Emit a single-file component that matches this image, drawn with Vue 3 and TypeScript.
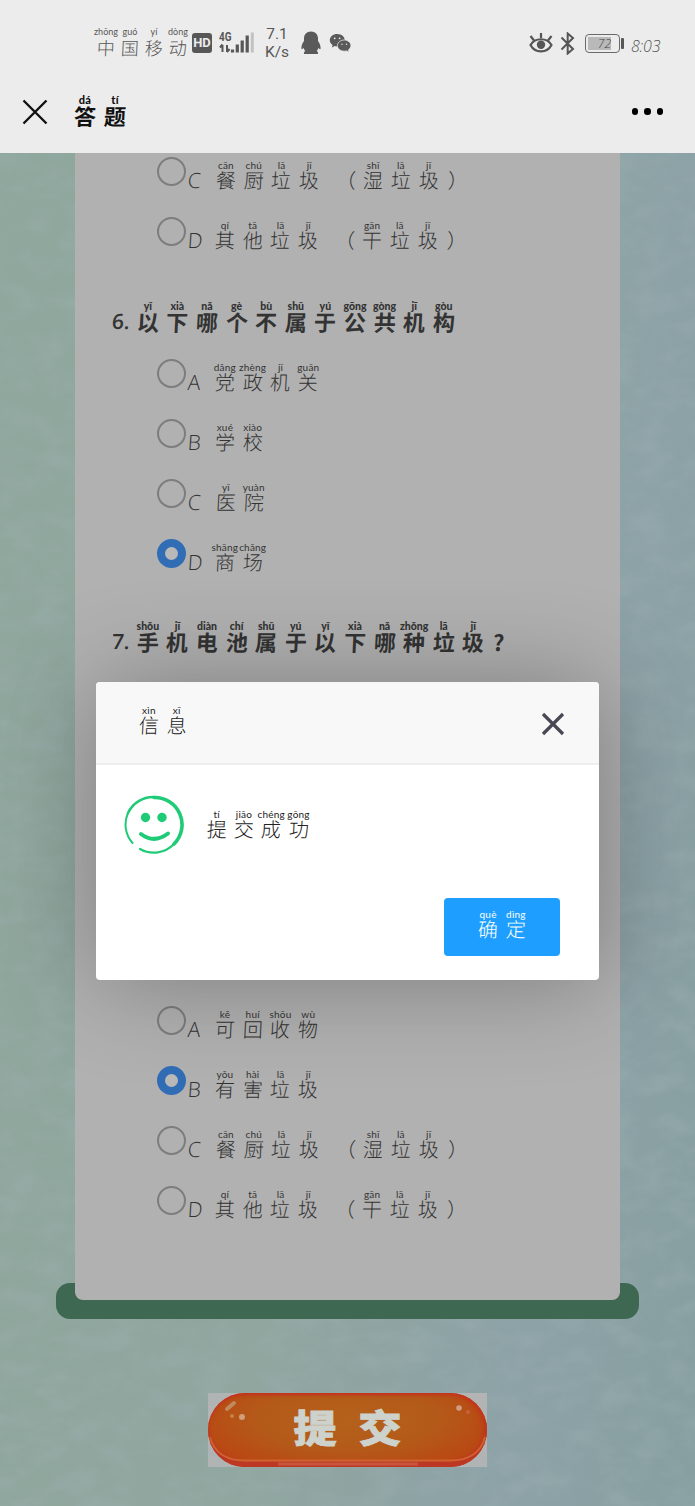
<script setup lang="ts">
interface Glyph { han: string; py: string; kind: string }
interface Option { letter: string; text: Glyph[]; checked?: boolean }
interface Question { id: string; no?: string; title: Glyph[]; options: Option[] }

const parse = (source: string): Glyph[] =>
  source.split(' ').map((part) => {
    const [han, py = ''] = part.split(':')
    const kind = han === '（' ? 'open' : han === '）' ? 'close' : han === '？' ? 'mark' : ''
    return { han: han === '？' ? '?' : han, py, kind }
  })

const opt = (letter: string, source: string, checked = false): Option => ({ letter, text: parse(source), checked })

const wet = '餐:cān 厨:chú 垃:lā 圾:jī （ 湿:shī 垃:lā 圾:jī ）'
const dry = '其:qí 他:tā 垃:lā 圾:jī （ 干:gān 垃:lā 圾:jī ）'

const questions: Question[] = [
  { id: 'q5', title: [], options: [opt('C', wet), opt('D', dry)] },
  {
    id: 'q6',
    no: '6.',
    title: parse('以:yǐ 下:xià 哪:nǎ 个:gè 不:bù 属:shǔ 于:yú 公:gōng 共:gòng 机:jī 构:gòu'),
    options: [
      opt('A', '党:dǎng 政:zhèng 机:jī 关:guān'),
      opt('B', '学:xué 校:xiào'),
      opt('C', '医:yī 院:yuàn'),
      opt('D', '商:shāng 场:chǎng', true),
    ],
  },
  {
    id: 'q7',
    no: '7.',
    title: parse('手:shǒu 机:jī 电:diàn 池:chí 属:shǔ 于:yú 以:yǐ 下:xià 哪:nǎ 种:zhǒng 垃:lā 圾:jī ？'),
    options: [],
  },
  {
    id: 'q8',
    title: [],
    options: [
      opt('A', '可:kě 回:huí 收:shōu 物:wù'),
      opt('B', '有:yǒu 害:hài 垃:lā 圾:jī', true),
      opt('C', wet),
      opt('D', dry),
    ],
  },
]

const carrier = parse('中:zhōng 国:guó 移:yí 动:dòng')
const pageTitle = parse('答:dá 题:tí')
const dialogTitle = parse('信:xìn 息:xī')
const message = parse('提:tí 交:jiāo 成:chéng 功:gōng')
const confirm = parse('确:què 定:dìng')
</script>

<template>
  <div class="page">
    <header class="top">
      <div class="status">
        <span class="glyphs carrier">
          <span v-for="(g, i) in carrier" :key="i" class="cell"><small>{{ g.py }}</small><b>{{ g.han }}</b></span>
        </span>
        <span class="hd">HD</span>
        <svg class="signal" width="36" height="24" viewBox="0 0 36 24">
          <text x="0" y="9.5" font-size="12" font-weight="700" textLength="12.500" lengthAdjust="spacingAndGlyphs" fill="#575757">4G</text>
          <path d="M3.500 21v-7M3.500 13.500L1 16.500M8 14v7M8 21l2.500-3" stroke="#575757" stroke-width="2" fill="none" />
          <path d="M13.500 21.500v-3M18.300 21.500v-8M23.200 21.500v-12M28.200 21.500v-17" stroke="#575757" stroke-width="3.200" />
          <path d="M33.300 21.500v-20" stroke="#c2c2c2" stroke-width="3" />
        </svg>
        <span class="speed">7.1<br />K/s</span>
        <svg class="qq" width="20" height="24" viewBox="0 0 20 24" fill="#5a5a5a">
          <path d="M10 .5C5.600.5 3 3.500 3 7.500v2.500C1.600 12 .3 14.500.4 17.200c.1 1.500 1 1.400 2.200-.4.400 1.500 1 2.500 1.800 3.300-1.400.6-1.600 1.400-1.300 3h13.800c.3-1.600.1-2.400-1.300-3 .8-.8 1.400-1.800 1.800-3.300 1.200 1.800 2.100 1.900 2.200.4.100-2.700-1.200-5.200-2.600-7.200V7.500c0-4-2.600-7-7-7z" />
        </svg>
        <svg class="wechat" width="23" height="20" viewBox="0 0 23 20">
          <path d="M8.300 1C4 1 .8 3.700.8 7.200c0 2 1.100 3.700 2.800 4.800l-.8 2.600 3-1.500c.8.200 1.600.3 2.500.3 4.200 0 7.500-2.800 7.500-6.200S12.500 1 8.300 1z" fill="#5a5a5a" />
          <path d="M15.300 7c-3.900 0-6.900 2.500-6.900 5.600s3 5.600 6.900 5.600c.8 0 1.500-.1 2.200-.3l2.600 1.400-.7-2.400c1.500-1 2.500-2.500 2.500-4.300 0-3.100-2.900-5.600-6.600-5.600z" fill="#5a5a5a" stroke="#ececec" stroke-width=".8" />
          <g fill="#ececec"><circle cx="5.700" cy="5.300" r=".9" /><circle cx="10.600" cy="5.300" r=".9" /><circle cx="13" cy="11.300" r=".7" /><circle cx="17.500" cy="11.300" r=".7" /></g>
        </svg>
        <svg class="eye" width="24" height="22" viewBox="0 0 24 22" fill="none" stroke="#555" stroke-width="2.200">
          <path d="M1.500 13C6 5.300 18 5.300 22.500 13 18 21.500 6 21.500 1.500 13z" />
          <circle cx="12" cy="12.800" r="4.200" fill="#555" stroke="none" />
          <path d="M12 6V1M5 8.500L1.500 4M19 8.500L22.500 4" />
        </svg>
        <svg class="bt" width="15" height="23" viewBox="0 0 15 23" fill="none" stroke="#555" stroke-width="2">
          <path d="M1.500 5.500L13 17l-5.300 4.500v-20L13 6 1.500 17.500" />
        </svg>
        <span class="battery"><i>72</i></span>
        <span class="clock">8:03</span>
      </div>
      <div class="nav">
        <svg width="26" height="26" viewBox="0 0 26 26"><path d="M1.500 1.500l23 23M24.500 1.500l-23 23" stroke="#111" stroke-width="2.400" /></svg>
        <span class="glyphs title">
          <span v-for="(g, i) in pageTitle" :key="i" class="cell"><small>{{ g.py }}</small><b>{{ g.han }}</b></span>
        </span>
        <span class="dots"><i /><i /><i /></span>
      </div>
    </header>

    <main class="content">
      <svg class="texture" width="695" height="1353" aria-hidden="true">
        <filter id="paper" x="0" y="0" width="100%" height="100%">
          <feTurbulence type="fractalNoise" baseFrequency="0.03 0.05" numOctaves="4" seed="4" />
          <feColorMatrix values="0 0 0 0 .35  0 0 0 0 .45  0 0 0 0 .46  2.4 0 0 0 -.95" />
        </filter>
        <rect width="695" height="1353" filter="url(#paper)" />
      </svg>
      <div class="base" />
      <div class="panel">
        <section v-for="q in questions" :key="q.id" :class="['question', q.id]">
          <h2 v-if="q.no">
            <span class="num">{{ q.no }}</span>
            <span class="glyphs heading">
              <span v-for="(g, i) in q.title" :key="i" :class="['cell', g.kind]"><small>{{ g.py }}</small><b>{{ g.han }}</b></span>
            </span>
          </h2>
          <div v-for="o in q.options" :key="o.letter" class="option">
            <span :class="['radio', { checked: o.checked }]" />
            <span :class="['letter', { wide: o.letter === 'C' }]">{{ o.letter }}</span>
            <span class="glyphs">
              <span v-for="(g, i) in o.text" :key="i" :class="['cell', g.kind]"><small>{{ g.py }}</small><b>{{ g.han }}</b></span>
            </span>
          </div>
        </section>
      </div>
      <div class="submit"><button><span>提</span><span>交</span>
        <svg width="279" height="74" viewBox="0 0 279 74" fill="none">
          <path d="M2 44C6 60 19 67.500 36 67.500h207c17 0 30-7.500 34-23.500" stroke="#cf6233" stroke-width="1.800" />
          <path d="M70 71h140" stroke="#cf6a4c" stroke-width="3" opacity=".6" />
          <path d="M19 16l7-6" stroke="#c08a5c" stroke-width="4" stroke-linecap="round" />
          <circle cx="34" cy="24" r="3" fill="#cfa079" /><circle cx="24" cy="23" r="2" fill="#c48447" />
          <circle cx="251" cy="15" r="2.800" fill="#d29c83" /><circle cx="260" cy="19" r="2" fill="#c9613c" />
        </svg>
      </button></div>
    </main>

    <div class="dialog">
      <div class="dialog-head">
        <span class="glyphs">
          <span v-for="(g, i) in dialogTitle" :key="i" class="cell"><small>{{ g.py }}</small><b>{{ g.han }}</b></span>
        </span>
        <svg width="24" height="24" viewBox="0 0 24 24"><path d="M2 2l20 20M22 2L2 22" stroke="#4a4754" stroke-width="3.200" /></svg>
      </div>
      <div class="dialog-body">
        <svg width="60" height="60" viewBox="0 0 60 60" fill="none" stroke="#1fcb77" stroke-linecap="round">
          <path d="M8.500 48A28 28 0 0 1 4 18" stroke-width="2" />
          <path d="M4 18A28 28 0 0 1 30 2" stroke-width="2.600" />
          <path d="M30 2.500A27.200 27.200 0 0 1 50 49" stroke-width="3.600" />
          <path d="M50 49A28 28 0 0 1 16 54" stroke-width="2.200" />
          <path d="M17 39q13 10 27-.5" stroke-width="4" />
          <circle cx="21.500" cy="22.500" r="4.700" fill="#1fcb77" stroke="none" /><circle cx="38" cy="22.500" r="4.700" fill="#1fcb77" stroke="none" />
        </svg>
        <span class="glyphs message">
          <span v-for="(g, i) in message" :key="i" class="cell"><small>{{ g.py }}</small><b>{{ g.han }}</b></span>
        </span>
      </div>
      <div class="dialog-foot">
        <button>
          <span class="glyphs">
            <span v-for="(g, i) in confirm" :key="i" class="cell"><small>{{ g.py }}</small><b>{{ g.han }}</b></span>
          </span>
        </button>
      </div>
    </div>
  </div>
</template>

<style>
body { margin: 0; }
</style>

<style scoped>
* { box-sizing: border-box; }
.page {
  position: relative;
  width: 695px;
  height: 1506px;
  overflow: hidden;
  display: flex;
  flex-direction: column;
  font-family: "Open Sans", "Noto Sans CJK SC", sans-serif;
  color: #333;
}
svg { display: block; flex: none; }
button { border: 0; padding: 0; font: inherit; }

.glyphs { display: inline-flex; flex: none; }
.cell { width: 27.8px; height: 30px; display: flex; flex-direction: column; align-items: center; white-space: nowrap; }
.cell small { height: 10px; font: 400 10px/10px Lato, "Open Sans", sans-serif; letter-spacing: .2px; }
.cell b { font: 300 20px/20px "Noto Sans CJK SC", sans-serif; transform: skewX(-3deg); }
.cell.open { width: 33px; align-items: flex-end; }
.cell.open + .cell { margin-left: 3px; }
.cell.close { width: 22px; margin-left: 5px; align-items: flex-start; }

.top { height: 153px; flex: none; background: #ececec; color: #575757; }
.status { height: 70px; padding: 16px 33px 0 94px; display: flex; align-items: center; }
.carrier { margin-top: -2px; }
.carrier .cell { width: 24px; }
.carrier .cell small { font-size: 9px; letter-spacing: 0; }
.carrier .cell b { font-size: 18px; }
.hd { width: 20px; height: 20px; margin-left: 2px; border-radius: 3px; background: #575757; color: #ececec; font: 700 13px/20px Roboto, sans-serif; text-align: center; }
.signal { margin-left: 7px; font-family: Roboto, sans-serif; }
.speed { width: 26px; margin-left: 9px; font: 400 15.500px/18px Roboto, sans-serif; text-align: center; }
.qq { margin-left: 11px; }
.wechat { margin-left: 8px; }
.eye { margin-left: auto; }
.bt { margin-left: 7px; }
.battery { position: relative; width: 35px; height: 19px; margin-left: 10px; padding: 2px; border: 1.500px solid #6a6a6a; border-radius: 4px; }
.battery i { display: block; width: 23px; height: 100%; background: #b9b9b9; font: italic 300 12px/14px "Open Sans", sans-serif; text-align: right; color: #444; }
.battery::after { content: ""; position: absolute; left: 35px; top: 3px; width: 3px; height: 11px; background: #575757; border-radius: 1px; }
.clock { width: 31px; margin: 5px 0 0 11px; font: italic 300 16px/20px "Open Sans", sans-serif; letter-spacing: -.2px; }
.nav { height: 83px; padding: 0 32px 0 22px; display: flex; align-items: center; color: #111; }
.title { margin: -4px 0 0 22px; }
.title .cell { width: 30px; }
.title .cell small { font-weight: 900; font-size: 11px; }
.title .cell b { font-weight: 700; font-size: 22px; }
.dots { display: flex; gap: 6px; margin-left: auto; }
.dots i { width: 6.500px; height: 6.500px; border-radius: 50%; background: #000; }

.content { position: relative; flex: 1; overflow: hidden; background: linear-gradient(98deg, #8fa79d 0%, #90a69f 50%, #8da2a7 78%, #879fa1 100%); }
.texture { position: absolute; left: 0; top: 0; opacity: .3; }
.base { position: absolute; left: 56px; top: 1130px; width: 583px; height: 36px; border-radius: 14px; background: #3f6853; }
.panel { position: relative; width: 545px; height: 1159px; margin: -12px 0 0 75px; border-radius: 8px; background: #b1b1b1; }
.question.q7 { height: 407px; }
.question.q6 h2 { height: 82px; padding-top: 40px; }
h2 { display: flex; height: 81px; margin: 0; padding: 38px 0 0 37px; font-weight: 400; }
.num { width: 21px; padding-top: 10px; font: 600 21px/20px "Open Sans", sans-serif; transform: skewX(-4deg); white-space: nowrap; }
.heading .cell { width: 29.600px; }
.heading .cell small { font-weight: 900; font-size: 10.500px; letter-spacing: 0; }
.heading .cell b { font-weight: 700; font-size: 22px; }
.heading .cell.mark { width: 22px; }
.option { height: 60px; padding: 16px 0 0 82px; display: flex; }
.radio { width: 29px; height: 29px; flex: none; border: 2px solid #7d7d7d; border-radius: 50%; }
.radio.checked { border: 8px solid #316db5; background: #b9b9b9; }
.letter { width: 25px; padding: 13px 0 0 2px; font: 300 21px/20px "Open Sans", sans-serif; transform: skewX(-4deg); }
.letter.wide { width: 26px; }
.option .glyphs { margin-top: 3px; }

.submit { width: 279px; height: 74px; margin: 93px 0 0 208px; background: #b4b4b4; }
.submit button { position: relative; display: flex; justify-content: center; gap: 22px; width: 279px; height: 74px; border-radius: 37px; background: radial-gradient(ellipse at 50% 35%, #b4611b 0%, #b45a19 45%, #b94a14 75%, #bd3a1a 100%); box-shadow: inset 0 -6px 2px #bd3824, inset 0 2px 2px #c4351f, inset -3px 0 6px #bf341a; color: #cdd2cc; }
.submit button span { font: 900 43px/74px "Noto Sans CJK SC", sans-serif; -webkit-text-stroke: 1px #cdd2cc; transform: translateY(-5px) scaleY(.88); }
.submit svg { position: absolute; left: 0; top: 0; }

.dialog { position: absolute; left: 96px; top: 682px; width: 503px; height: 298px; border-radius: 4px; background: #fff; box-shadow: 2px 2px 100px rgba(0, 0, 0, .3); color: #222; display: flex; flex-direction: column; }
.dialog-head { height: 83px; padding: 23px 34px 0 39px; display: flex; justify-content: space-between; border-bottom: 2px solid #eee; border-radius: 4px 4px 0 0; background: #f8f8f8; }
.dialog-head svg { margin-top: 7px; }
.dialog-body { display: flex; padding: 30px 0 0 28px; height: 133px; }
.message { margin: 14px 0 0 19px; }
.message .cell { width: 27.300px; }
.dialog-foot { display: flex; justify-content: flex-end; padding-right: 39px; }
.dialog-foot button { width: 116px; height: 58px; border-radius: 4px; background: #1e9fff; color: #fff; display: flex; justify-content: center; padding-top: 11px; }
</style>
